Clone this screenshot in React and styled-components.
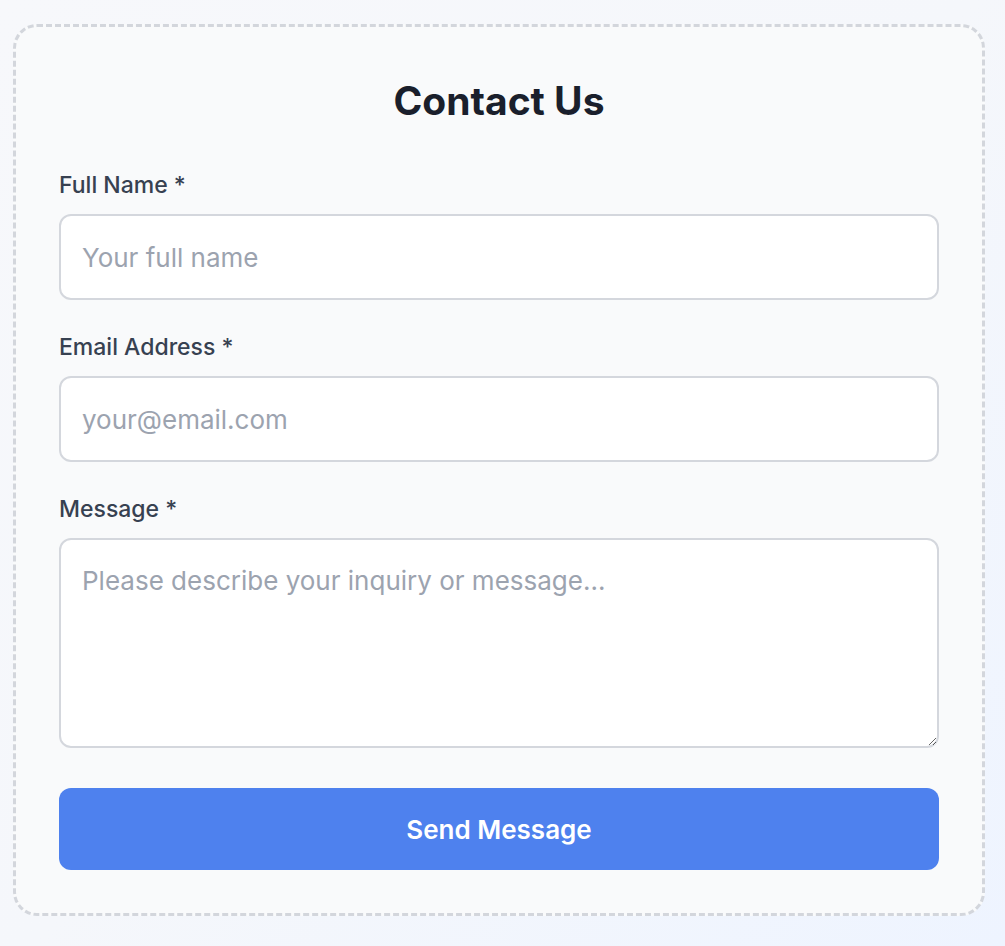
import React from "react";
import styled, { createGlobalStyle } from "styled-components";

const GlobalStyle = createGlobalStyle`
  * {
    box-sizing: border-box;
  }
  html, body {
    margin: 0;
    padding: 0;
  }
  body {
    min-height: 100vh;
    font-family: Inter, "Noto Sans", "Liberation Sans", sans-serif;
    background: linear-gradient(135deg, #f7f8fb 0%, #f5f7fb 50%, #eef4ff 100%);
  }
`;

const Page = styled.div`
  min-height: 100vh;
  padding: 24px 0 0 13px;
`;

const Card = styled.form`
  width: 972px;
  padding: 50px 43px 43px;
  background: #f9fafb;
  border: 3px dashed #d3d6dc;
  border-radius: 24px;
`;

const Title = styled.h1`
  margin: 0 0 44px;
  font-size: 39px;
  font-weight: 700;
  line-height: 48px;
  text-align: center;
  color: #1a1f2c;
`;

const Field = styled.div`
  margin-bottom: ${(p) => (p.last ? "40px" : "31px")};
`;

const Label = styled.label`
  display: block;
  margin-bottom: 12px;
  font-size: 23px;
  font-weight: 500;
  line-height: 33px;
  color: #374151;
`;

const inputBase = `
  display: block;
  width: 100%;
  padding: 25px 21px;
  font-family: Inter, "Noto Sans", "Liberation Sans", sans-serif;
  font-size: 26px;
  line-height: normal;
  color: #111827;
  background: #fff;
  border: 2px solid #d4d7dd;
  border-radius: 12px;
  outline: none;

  &::placeholder {
    color: #9ca3af;
  }
`;

const Input = styled.input`
  ${inputBase}
  height: 86px;
`;

const TextArea = styled.textarea`
  ${inputBase}
  height: 210px;
  resize: vertical;
`;

const SubmitButton = styled.button`
  display: block;
  width: 100%;
  height: 82px;
  font-family: Inter, "Noto Sans", "Liberation Sans", sans-serif;
  font-size: 26px;
  font-weight: 600;
  color: #fff;
  background: #4e81ee;
  border: none;
  border-radius: 12px;
  cursor: pointer;

  &:hover {
    background: #3f72e0;
  }
`;

const App = () => {
  return (
    <>
      <GlobalStyle />
      <Page>
        <Card onSubmit={(e) => e.preventDefault()}>
          <Title>Contact Us</Title>
          <Field>
            <Label htmlFor="name">Full Name *</Label>
            <Input id="name" type="text" placeholder="Your full name" />
          </Field>
          <Field>
            <Label htmlFor="email">Email Address *</Label>
            <Input id="email" type="email" placeholder="your@email.com" />
          </Field>
          <Field last>
            <Label htmlFor="message">Message *</Label>
            <TextArea
              id="message"
              placeholder="Please describe your inquiry or message..."
            />
          </Field>
          <SubmitButton type="submit">Send Message</SubmitButton>
        </Card>
      </Page>
    </>
  );
};

export default App;
